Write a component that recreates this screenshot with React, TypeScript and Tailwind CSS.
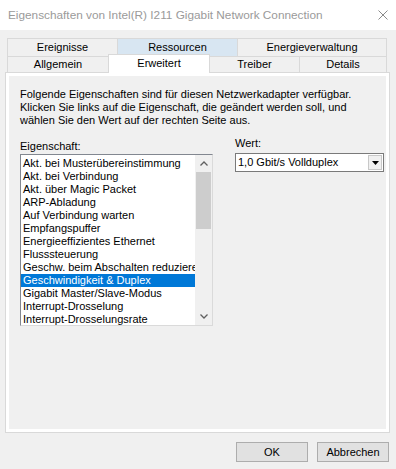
import React from "react";

const items = [
  "Akt. bei Musterübereinstimmung",
  "Akt. bei Verbindung",
  "Akt. über Magic Packet",
  "ARP-Abladung",
  "Auf Verbindung warten",
  "Empfangspuffer",
  "Energieeffizientes Ethernet",
  "Flusssteuerung",
  "Geschw. beim Abschalten reduzieren",
  "Geschwindigkeit & Duplex",
  "Gigabit Master/Slave-Modus",
  "Interrupt-Drosselung",
  "Interrupt-Drosselungsrate",
];

const font = { fontFamily: '"Liberation Sans", Arial, sans-serif' };

export default function App() {
  return (
    <div
      className="w-[396px] h-[469px] bg-[#f0f0f0] overflow-hidden text-[11px] leading-[13px] text-black"
      style={font}
    >
      {/* Title bar */}
      <div className="h-[30px] bg-white flex items-center justify-between pl-[8px] pr-[8px]">
        <span className="text-[11.8px] text-[#9a9a9a] whitespace-nowrap">
          Eigenschaften von Intel(R) I211 Gigabit Network Connection
        </span>
        <svg width="10" height="10" viewBox="0 0 10 10">
          <path d="M0.5 0.5 L9.5 9.5 M9.5 0.5 L0.5 9.5" stroke="#8a8a8a" strokeWidth="1" />
        </svg>
      </div>

      {/* Tabs */}
      <div className="pt-[8px] pl-[7px]">
        <div className="flex h-[18px]">
          <div className="w-[110px] border-t border-l border-[#d9d9d9] flex items-center justify-center">
            Ereignisse
          </div>
          <div className="w-[120px] border-t border-l border-[#d9d9d9] bg-[#d8e6f2] flex items-center justify-center">
            Ressourcen
          </div>
          <div className="w-[150px] border-t border-l border-r border-[#d9d9d9] flex items-center justify-center">
            Energieverwaltung
          </div>
        </div>
        <div className="flex h-[16px] items-start">
          <div className="w-[101px] h-[16px] border-t border-l border-[#d9d9d9] flex items-center justify-center">
            Allgemein
          </div>
          <div className="relative z-10 w-[102px] h-[19px] mt-[-2px] mb-[-1px] border-t border-l border-r border-[#d9d9d9] bg-white flex items-center justify-center pb-[2px]">
            Erweitert
          </div>
          <div className="w-[89px] h-[16px] border-t border-[#d9d9d9] flex items-center justify-center">
            Treiber
          </div>
          <div className="w-[88px] h-[16px] border-t border-l border-r border-[#d9d9d9] flex items-center justify-center">
            Details
          </div>
        </div>
      </div>

      {/* Panel */}
      <div className="ml-[5px] w-[385px] h-[361px] border border-[#d9d9d9] bg-white p-[3px] flex">
        <div className="flex-1 bg-[#f0f0f0] pl-[11px] pt-[12px] flex flex-col">
          <p className="whitespace-nowrap">
            Folgende Eigenschaften sind für diesen Netzwerkadapter verfügbar.
            <br />
            Klicken Sie links auf die Eigenschaft, die geändert werden soll, und
            <br />
            wählen Sie den Wert auf der rechten Seite aus.
          </p>
          <div className="flex mt-[10px] gap-[22px]">
            <div className="flex flex-col pt-[3px]">
              <div>Eigenschaft:</div>
              <div className="mt-[1px] w-[193px] h-[172px] border border-t-[#828790] border-l-[#828790] border-r-[#dadada] border-b-[#dadada] bg-white flex">
                <div className="w-[174px] pt-[2px] overflow-hidden">
                  {items.map((it, i) => (
                    <div
                      key={i}
                      className={
                        "h-[13px] pl-[2px] whitespace-nowrap overflow-hidden " +
                        (i === 9 ? "bg-[#0078d7] text-white" : "")
                      }
                    >
                      {it}
                    </div>
                  ))}
                </div>
                <div className="w-[17px] bg-[#f0f0f0] flex flex-col">
                  <div className="h-[17px] flex items-center justify-center">
                    <svg width="8" height="5" viewBox="0 0 8 5">
                      <path d="M0.5 4.5 L4 1 L7.5 4.5" stroke="#606060" strokeWidth="1.3" fill="none" />
                    </svg>
                  </div>
                  <div className="mx-[1px] h-[57px] bg-[#cdcdcd]" />
                  <div className="flex-1" />
                  <div className="h-[17px] flex items-center justify-center">
                    <svg width="8" height="5" viewBox="0 0 8 5">
                      <path d="M0.5 0.5 L4 4 L7.5 0.5" stroke="#606060" strokeWidth="1.3" fill="none" />
                    </svg>
                  </div>
                </div>
              </div>
            </div>
            <div className="flex flex-col">
              <div>Wert:</div>
              <div className="mt-[3px] w-[149px] h-[19px] border border-[#7a7a7a] bg-white flex items-center pl-[2px] pr-[1px]">
                <span className="flex-1 whitespace-nowrap">1,0 Gbit/s Vollduplex</span>
                <div className="w-[14px] h-[15px] bg-[#f0f0f0] border border-[#c8c8c8] flex items-center justify-center">
                  <svg width="7" height="4" viewBox="0 0 7 4">
                    <path d="M0 0 L7 0 L3.5 4 Z" fill="#000" />
                  </svg>
                </div>
              </div>
            </div>
          </div>
        </div>
      </div>

      {/* Buttons */}
      <div className="flex justify-end gap-[9px] pr-[7px] mt-[9px]">
        <button className="w-[72px] h-[20px] border border-[#adadad] bg-[#e1e1e1] flex items-center justify-center">
          OK
        </button>
        <button className="w-[72px] h-[20px] border border-[#adadad] bg-[#e1e1e1] flex items-center justify-center">
          Abbrechen
        </button>
      </div>
    </div>
  );
}
